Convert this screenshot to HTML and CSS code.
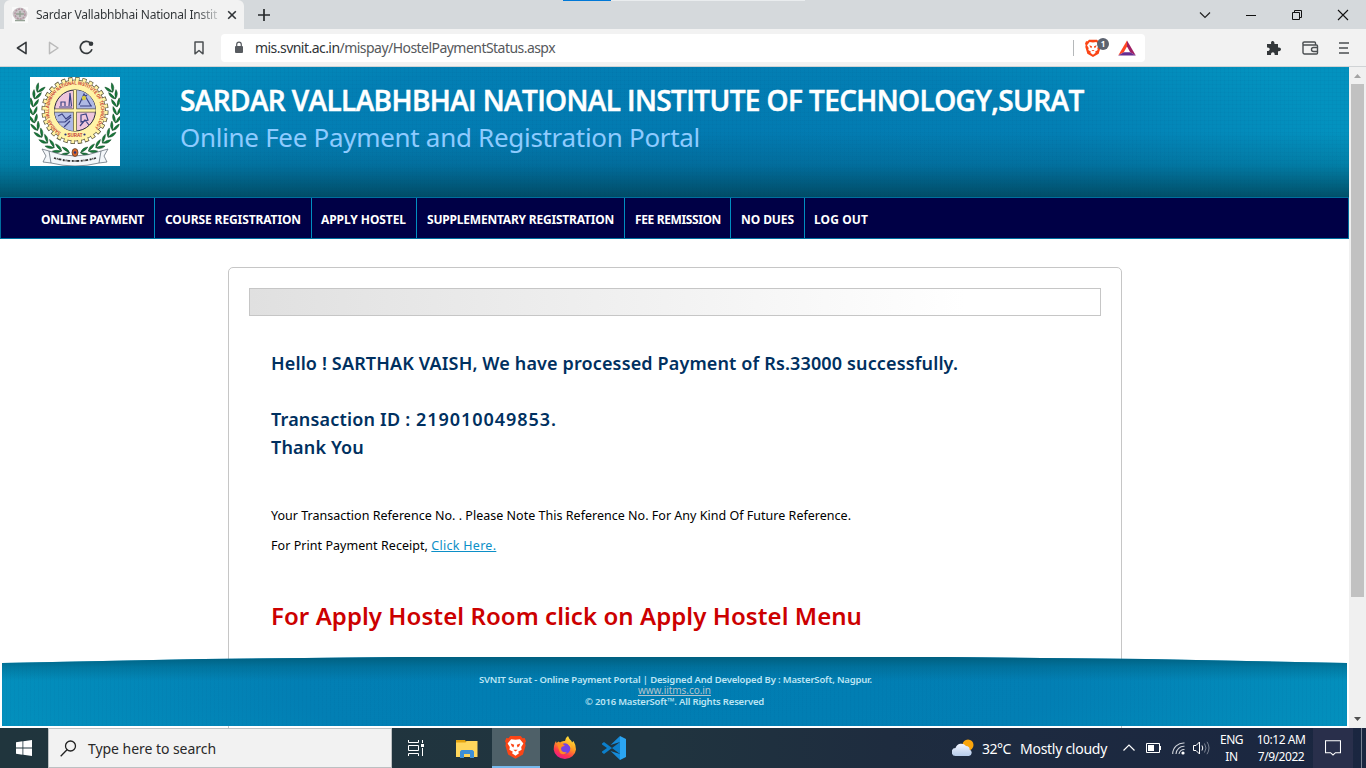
FILE: index.html
```html
<!DOCTYPE html>
<html lang="en">
<head>
<meta charset="utf-8">
<title>Sardar Vallabhbhai National Institute of Technology</title>
<link rel="stylesheet" href="styles.css">
</head>
<body>
<div class="titlebar">
  <div class="tab">
    <svg class="favicon" width="16" height="16" viewBox="0 0 16 16"><rect width="16" height="16" fill="#fafafa"/><ellipse cx="8" cy="7" rx="7.400" ry="6.500" fill="#c9c3c6"/><circle cx="8" cy="7" r="5" fill="none" stroke="#b294a0" stroke-width="1.500" stroke-dasharray="2 1"/><path d="M4 7h8M8 4v6M3 13.500h10" stroke="#95a295" stroke-width="1.500"/></svg>
    <span class="tab-title">Sardar Vallabhbhai National Instit</span>
    <svg class="tab-close" width="10" height="10" viewBox="0 0 10 10"><path d="M1.200 1.200l7.600 7.600M8.800 1.200L1.200 8.800" stroke="#303437" stroke-width="1.600"/></svg>
  </div>
  <svg class="newtab" width="12" height="12" viewBox="0 0 12 12"><path d="M6 0v12M0 6h12" stroke="#26292b" stroke-width="1.700"/></svg>
  <i class="loadmark"></i>
  <div class="window-buttons">
    <svg width="12" height="12" viewBox="0 0 12 12"><path d="M1 3.500l5 5 5-5" fill="none" stroke="#222" stroke-width="1.200"/></svg>
    <svg width="12" height="12" viewBox="0 0 12 12"><path d="M1 6.500h10" stroke="#111"/></svg>
    <svg width="12" height="12" viewBox="0 0 12 12"><path d="M1.500 3.500h7v7h-7zM3.500 3.500v-2h7v7h-2" fill="none" stroke="#111"/></svg>
    <svg width="12" height="12" viewBox="0 0 12 12"><path d="M1 1l10 10M11 1L1 11" stroke="#111" stroke-width="1.100"/></svg>
  </div>
</div>
<div class="toolbar">
  <svg class="back" width="12" height="14" viewBox="0 0 12 14"><path d="M10 1.300v11.400L1.400 7z" fill="none" stroke="#35393c" stroke-width="1.600" stroke-linejoin="round"/></svg>
  <svg class="forward" width="12" height="14" viewBox="0 0 12 14"><path d="M1.500 1.300v11.400L10 7z" fill="none" stroke="#bbb" stroke-width="1.500" stroke-linejoin="round"/></svg>
  <svg class="reload" width="15" height="15" viewBox="0 0 15 15"><path d="M11.500 3.100A6 6 0 1 0 13 9.300" fill="none" stroke="#35393c" stroke-width="1.700"/><circle cx="12" cy="3.800" r="2.300" fill="#35393c"/></svg>
  <svg class="bookmark" width="10" height="14" viewBox="0 0 10 14"><path d="M1 1h8v11.800L5 9.500l-4 3.300z" fill="none" stroke="#4c5053" stroke-width="1.500" stroke-linejoin="round"/></svg>
  <div class="address">
    <svg width="10" height="13" viewBox="0 0 10 13"><rect x="1" y="5" width="8" height="7" rx="1" fill="#575b60"/><path d="M2.700 6V3.400a2.300 2.300 0 0 1 4.600 0V6" fill="none" stroke="#575b60" stroke-width="1.200"/></svg>
    <span class="url"><b>mis.svnit.ac.in</b>/mispay/HostelPaymentStatus.aspx</span>
    <i class="rule"></i>
    <span class="shield">
      <svg width="16" height="18" viewBox="0 0 24 27"><use href="#lion"/></svg>
      <em>1</em>
    </span>
    <svg class="bat" width="18" height="16" viewBox="0 0 18 16"><path d="M9 .5L.2 15.500 5.800 12.200 9 6.500z" fill="#ff4724"/><path d="M9 .5l8.800 15L12.200 12.200 9 6.500z" fill="#9e1f63"/><path d="M.2 15.500h17.600l-5.600-3.300H5.800z" fill="#662d91"/></svg>
  </div>
  <div class="tools">
    <svg width="16" height="16" viewBox="0 0 16 16"><path d="M1 4h4.200C4 0 9.200 0 8.400 4H12v3.600c4-.9 4 4.400 0 3.600V15H8.600c.7-3.800-4-3.800-3.600 0H1v-4c3.600.3 3.600-4 0-3.500z" fill="#33373a"/></svg>
    <svg width="17" height="14" viewBox="0 0 17 14"><path d="M13.500 4V2a1 1 0 0 0-1-1H2.300a1.300 1.300 0 0 0 0 3h12.200a1 1 0 0 1 1 1v7a1 1 0 0 1-1 1H2.500A1.500 1.500 0 0 1 1 11.500V2.500M15.500 6.500h-4a2 2 0 0 0 0 4h4" fill="none" stroke="#4b4f52" stroke-width="1.400"/></svg>
    <svg width="10" height="12" viewBox="0 0 10 12"><path d="M0 1h10M0 6h9M0 11h10" stroke="#4b4f52" stroke-width="1.600"/></svg>
  </div>
</div>

<div class="viewport">
  <main class="page">
    <header class="banner">
      <svg class="logo" width="90" height="89" viewBox="0 0 90 89">
        <defs>
          <path id="ring" d="M31 55.500A26 26 0 1 1 59 55.500"/>
          <path id="leaf" d="M49 76Q46 71 40.500 72Q43 75 49 76M49 76Q46 81 40.500 80Q43 77 49 76" fill="#17793a" stroke="#0b3f1d" stroke-width=".4"/>
          <g id="branch">
            <use href="#leaf" transform="rotate(13 45 34)"/><use href="#leaf" transform="rotate(24 45 34)"/><use href="#leaf" transform="rotate(35 45 34)"/><use href="#leaf" transform="rotate(46 45 34)"/><use href="#leaf" transform="rotate(57 45 34)"/><use href="#leaf" transform="rotate(68 45 34)"/><use href="#leaf" transform="rotate(79 45 34)"/><use href="#leaf" transform="rotate(90 45 34)"/><use href="#leaf" transform="rotate(101 45 34)"/><use href="#leaf" transform="rotate(112 45 34)"/><use href="#leaf" transform="rotate(122 45 34)"/>
          </g>
          <g id="lion">
            <path d="M6 1h12l2 2.500 2.500-.3L24 7l-1 2 .5 3-3 10L12 27 3.500 22l-3-10L1 9 0 7l1.500-3.800L4 3.500z" fill="#fb4516"/>
            <path d="M7 4.500l5 .8 5-.8 4 5-2.500 4 .5 3-4 2.500 1 1.500-4 3-4-3 1-1.500-4-2.500.5-3L3 9.500z" fill="#fff"/>
            <path d="M6.500 9.500l4 1.300-.8 3.200-2-1.500zM17.500 9.500l-4 1.300.8 3.200 2-1.500zM9.500 16.500h5L12 18.500z" fill="#fb4516"/>
          </g>
        </defs>
        <rect width="90" height="89" fill="#fff"/>
        <use href="#branch"/><use href="#branch" transform="matrix(-1 0 0 1 90 0)"/>
        <circle cx="45" cy="33.500" r="30.500" fill="#fff3a6" stroke="#55503a" stroke-width=".8"/>
        <circle cx="45" cy="33.500" r="31" fill="none" stroke="#55503a" stroke-width="5" stroke-dasharray="4.200 2.757"/>
        <circle cx="45" cy="33.500" r="30.800" fill="none" stroke="#fff3a6" stroke-width="3.900" stroke-dasharray="3.100 3.812" stroke-dashoffset="-.55"/>
        <circle cx="45" cy="33.500" r="29.800" fill="#fff3a6"/>
        <circle cx="45" cy="33.500" r="20.500" fill="#eec6dc" stroke="#27263d" stroke-width="1"/>
        <path d="M45 33.500V13A20.500 20.500 0 0 1 65.500 33.500zM45 33.500V54A20.500 20.500 0 0 1 24.500 33.500z" fill="#aeb9e4"/>
        <path d="M45 13v41M24.500 33.500h41" stroke="#5d5946" stroke-width="4"/><path d="M45 13v41M24.500 33.500h41" stroke="#fff3a6" stroke-width="2.500"/>
        <path d="M31 29v-4h4v4M39 29l1-13 1.500 13M29 30h13M49 28l5-11 7 12M50 29h12M52 23l5-5M28 39l4-2 4 5 5-4M28 45h7l6-5M34 50l6-6M51 38l5-1 2 6-7 2zM50 49l5-6 4 5" fill="none" stroke="#3b4384" stroke-width="1.200"/>
        <circle cx="54" cy="21" r="2.200" fill="#d4c945"/>
        <text class="ring-text"><textPath href="#ring" textLength="126" lengthAdjust="spacingAndGlyphs">SARDAR VALLABHBHAI NATIONAL INSTITUTE OF TECHNOLOGY</textPath></text>
        <text class="seal-text" x="45" y="60" text-anchor="middle">SURAT</text>
        <circle cx="35.500" cy="57.500" r="1.100" fill="#26337c"/><circle cx="54.500" cy="57.500" r="1.100" fill="#26337c"/>
        <path d="M12 72l7 2Q45 84 71 74l7-2-4 7 3 6-8 1Q45 92 21 86l-8-1 3-6z" fill="#f4f7fa" stroke="#56616d" stroke-width=".7"/>
        <path d="M19 74l2 12M71 74l-2 12" stroke="#56616d" stroke-width=".7"/>
        <ellipse cx="45" cy="75.500" rx="3" ry="4" fill="#d8682c" stroke="#372c20" stroke-width=".6"/><circle cx="45" cy="75.500" r="1.200" fill="#26337c"/>
        <path d="M24 81Q45 87 66 81" fill="none" stroke="#333" stroke-width="1.800" stroke-dasharray="2 .8 1 .7 3 1.500"/>
      </svg>
      <div class="heading">
        <h1>SARDAR VALLABHBHAI NATIONAL INSTITUTE OF TECHNOLOGY,SURAT</h1>
        <h2>Online Fee Payment and Registration Portal</h2>
      </div>
    </header>
    <nav class="menu">
      <a class="m1">ONLINE PAYMENT</a><a class="m2">COURSE REGISTRATION</a><a class="m3">APPLY HOSTEL</a><a class="m4">SUPPLEMENTARY REGISTRATION</a><a class="m5">FEE REMISSION</a><a class="m6">NO DUES</a><a class="m7">LOG OUT</a>
    </nav>
    <section class="card">
      <div class="strip"></div>
      <div class="message">
        <p class="hello">Hello ! SARTHAK VAISH, We have processed Payment of Rs.33000 successfully.</p>
        <p class="trans"><span>Transaction ID :</span> 219010049853.</p>
        <p class="thanks">Thank You</p>
        <p class="note">Your Transaction Reference No. . Please Note This Reference No. For Any Kind Of Future Reference.</p>
        <p class="print">For Print Payment Receipt, <a>Click Here.</a></p>
        <p class="apply">For Apply Hostel Room click on Apply Hostel Menu</p>
      </div>
    </section>
    <footer class="footer">
      <p class="f1">SVNIT Surat - Online Payment Portal | Designed And Developed By : MasterSoft, Nagpur.</p>
      <p class="f2">www.iitms.co.in</p>
      <p class="f3">© 2016 MasterSoft™. All Rights Reserved</p>
    </footer>
  </main>
  <div class="scrollbar">
    <svg width="17" height="17" viewBox="0 0 17 17"><path d="M5 11l3.500-4 3.500 4z" fill="#a3a3a3"/></svg>
    <div class="thumb"></div>
    <svg width="17" height="17" viewBox="0 0 17 17"><path d="M5 6h7l-3.500 4z" fill="#505050"/></svg>
  </div>
</div>

<div class="taskbar">
  <div class="start"><svg width="16" height="16" viewBox="0 0 16 16"><path d="M0 2.300l6.500-1v6.300H0zM7.300 1.200L16 0v7.600H7.300zM0 8.400h6.500v6.300l-6.500-1zM7.300 8.400H16V16l-8.700-1.200z" fill="#fff"/></svg></div>
  <div class="search">
    <svg width="17" height="17" viewBox="0 0 17 17"><circle cx="10.500" cy="6" r="5" fill="none" stroke="#222" stroke-width="1.300"/><path d="M7 9.800L.7 16.300" stroke="#222" stroke-width="1.300"/></svg>
    <span>Type here to search</span>
  </div>
  <div class="apps">
    <div><svg width="17" height="16" viewBox="0 0 17 16"><path d="M.5 0v2.500h10V0M.5 16v-2.500h10V16M.5 5.500h10v5H.5zM14.500 0v3M14.500 8v8" fill="none" stroke="#fff"/><path d="M13 4h3v3h-3z" fill="#fff"/></svg></div>
    <div class="explorer"><svg width="22" height="19" viewBox="0 0 22 19"><path d="M0 1h9l1 1.500h11V18H0z" fill="#e4a410"/><path d="M0 3.500h9.500l1-1.500H21.500v16H0z" fill="#ffd65c"/><path d="M4 19v-6.500L5.500 11h11l1.500 1.500V19h-4v-4H8v4z" fill="#3c8fd8"/></svg></div>
    <div class="active"><svg width="21" height="24" viewBox="0 0 24 27"><use href="#lion"/></svg></div>
    <div class="fox"><svg width="24" height="24" viewBox="0 0 24 24"><defs><linearGradient id="flame" x1=".8" y1="0" x2=".3" y2="1"><stop offset="0" stop-color="#fff13f"/><stop offset=".45" stop-color="#ff9a22"/><stop offset=".75" stop-color="#ff394b"/><stop offset="1" stop-color="#ed168d"/></linearGradient></defs><path d="M1 10Q1.500 7 3 5l.5 2L5.500 5.500 7 6.500q2-2 5-1.500Q12 2 15 0q1 3 3.500 5l.5 1.500L20.500 5Q23 9 23 13.500A11.200 10.500 0 0 1 .7 13.500z" fill="url(#flame)"/><circle cx="12" cy="12.500" r="5.300" fill="#7542e5"/><path d="M4 8q5-2 8 2-4 0-4 3 1 4 6 3-3 4-7 1z" fill="#ff8b22"/><path d="M12 6q6 1 6.500 6L16 9.500q-1-2-4-3.500" fill="#ffba2c"/></svg></div>
    <div class="code"><svg width="24" height="24" viewBox="0 0 24 24"><path d="M0 7.500L2 6l16 12V6L2 18l-2-1.500v-1L5 12 0 8.500z" fill="#0c7fcb"/><path d="M18 0v24l-9.500-9L18 18V6L8.500 9z" fill="#168bd9"/><path d="M18 0l6 3v18l-6 3z" fill="#2ba5f2"/></svg></div>
  </div>
  <div class="tray">
    <svg class="weather" width="22" height="18" viewBox="0 0 22 18"><defs><linearGradient id="cloud" x2="0" y2="1"><stop stop-color="#f2f5ff"/><stop offset="1" stop-color="#b5cbea"/></linearGradient></defs><circle cx="16" cy="6" r="5.500" fill="#faa50b"/><path d="M4 17a4 4 0 0 1-.5-8A6 6 0 0 1 14 7q4 .5 3.500 3.500A3.400 3.400 0 0 1 17 17z" fill="url(#cloud)"/></svg>
    <span class="temp">32°C</span><span class="sky">Mostly cloudy</span>
    <svg class="chev" width="12" height="8" viewBox="0 0 12 8"><path d="M.5 6.500L6 1l5.500 5.500" fill="none" stroke="#fff" stroke-width="1.200"/></svg>
    <svg class="battery" width="15" height="10" viewBox="0 0 15 10"><path d="M.5.500h13v9H.5z" fill="none" stroke="#fff"/><path d="M2 2h6v6H2zM14 3h1v4h-1z" fill="#fff"/></svg>
    <svg class="wifi" width="13" height="13" viewBox="0 0 13 13"><g fill="none" stroke="#cfd3da" stroke-width="1.100"><path d="M.7 12A11 11 0 0 1 12.500 1M4 12A8 8 0 0 1 12.500 4.300M7 12a5 5 0 0 1 5.500-4.500"/></g><circle cx="11" cy="11" r="1.600" fill="#fff"/></svg>
    <svg class="volume" width="17" height="14" viewBox="0 0 17 14"><path d="M.5 4.500H3L6.500 1v12L3 9.500H.5z" fill="none" stroke="#fff"/><path d="M9 4.500q1.500 2.500 0 5" fill="none" stroke="#fff"/><path d="M11.500 2.500q3 4.500 0 9M14 .8q4 6.200 0 12.400" fill="none" stroke="#7b8392"/></svg>
    <div class="lang"><span>ENG</span><span>IN</span></div>
    <div class="clock"><span class="time">10:12 AM</span><span class="date">7/9/2022</span></div>
    <div class="notice"><svg width="16" height="16" viewBox="0 0 16 16"><path d="M.5.700h15v12H10.500L8 15 5.500 12.700h-5z" fill="none" stroke="#fff" stroke-width="1.100"/></svg></div>
  </div>
</div>
</body>
</html>
```
FILE: styles.css
```css
* { box-sizing: border-box; }
body { margin: 0; width: 1366px; height: 768px; overflow: hidden; display: flex; flex-direction: column; background: #fff; font-family: "Noto Sans", "Open Sans", sans-serif; }
h1, h2, p { margin: 0; white-space: nowrap; }
svg { display: block; flex: none; }

.titlebar { position: relative; height: 29px; flex: none; display: flex; align-items: center; background: #d5d9dc; }
.tab { width: 240px; height: 29px; margin-left: 4px; padding-left: 8px; display: flex; align-items: center; background: #f2f2f2; border-radius: 6px 6px 0 0; }
.tab-title { width: 182px; margin-left: 8px; font-size: 12px; line-height: 18px; letter-spacing: -.243px; white-space: nowrap; overflow: hidden; background: linear-gradient(90deg, #303437 160px, #c9cbcc 182px); -webkit-background-clip: text; background-clip: text; color: transparent; }
.tab-close { margin-left: 9px; }
.newtab { margin-left: 14px; }
.loadmark { position: absolute; left: 563px; top: 0; width: 242px; height: 1px; background: linear-gradient(90deg, #0078d7 48px, #e9ecee 48px); }
.window-buttons { margin-left: auto; margin-right: 17px; display: flex; gap: 34px; }

.toolbar { height: 38px; flex: none; display: flex; align-items: center; background: #f2f2f2; border-bottom: 1px solid #d0d3d5; }
.back { margin-left: 16px; }
.forward { margin-left: 20px; }
.reload { margin-left: 19px; }
.bookmark { margin-left: 100px; }
.address { width: 924px; height: 28px; margin-left: 17px; padding: 0 9px 0 13px; display: flex; align-items: center; background: #fff; border-radius: 4px; }
.url { margin-left: 11px; font-size: 14px; letter-spacing: -.54px; color: #56595c; white-space: nowrap; }
.url b { font-weight: 400; color: #303437; }
.rule { width: 1px; height: 16px; margin-left: auto; background: #b5b8ba; }
.shield { position: relative; margin-left: 11px; }
.shield em { position: absolute; left: 12px; top: -1px; width: 12px; height: 12px; border-radius: 6px; background: #5c6370; color: #fff; font: 700 8px/12px "Open Sans", sans-serif; text-align: center; }
.bat { margin-left: 17px; }
.tools { flex: 1; margin-right: 17px; display: flex; align-items: center; justify-content: flex-end; gap: 20px; }

.viewport { height: 661px; flex: none; display: flex; }
.page { position: relative; width: 1349px; overflow: hidden; }
.banner { height: 130px; padding: 10px 0 0 30px; display: flex; background:
  linear-gradient(180deg, rgba(0,60,80,0) 50%, rgba(0,67,91,.24) 75%, rgba(0,64,84,.8) 100%),
  repeating-linear-gradient(90deg, rgba(0,80,130,.05) 0 1px, transparent 1px 4px),
  repeating-linear-gradient(0deg, rgba(0,80,130,.05) 0 1px, transparent 1px 4px),
  radial-gradient(ellipse 610px 150px at 50% 65%, #0279b0, #037fb4 65%, #0392bf 110%); }
.heading { margin-left: 60px; }
h1 { margin-top: 4px; font-size: 28px; line-height: 38px; font-weight: 600; font-family: "Open Sans", sans-serif; letter-spacing: -.605px; color: #fff; -webkit-text-stroke: .5px #fff; }
h2 { font-size: 26px; line-height: 36px; font-weight: 400; letter-spacing: -.303px; color: #8ecbff; }
.ring-text { font: 700 5px "Liberation Sans", sans-serif; fill: #c5332c; }
.seal-text { font: 700 4.500px "Liberation Sans", sans-serif; fill: #c5332c; }
.menu { height: 42px; display: flex; background: #000046; border: 1px solid #006f9f; }
.menu a { height: 40px; padding-left: 10px; border-right: 1px solid #008fc0; font-size: 12px; line-height: 44px; font-weight: 700; color: #fff; white-space: nowrap; }
.menu .m1 { width: 154px; padding-left: 40px; letter-spacing: -.277px; }
.menu .m2 { width: 157px; letter-spacing: -.106px; }
.menu .m3 { width: 105px; padding-left: 9px; letter-spacing: -.069px; }
.menu .m4 { width: 208px; letter-spacing: -.206px; }
.menu .m5 { width: 106px; letter-spacing: -.374px; }
.menu .m6 { width: 74px; letter-spacing: -.079px; }
.menu .m7 { padding-left: 9px; border: 0; letter-spacing: .106px; }
.card { width: 894px; height: 480px; margin: 28px 0 0 228px; padding: 20px 20px 0; border: 1px solid #c6c6c6; border-radius: 5px; }
.strip { height: 28px; border: 1px solid #c6c6c6; background: linear-gradient(90deg, #e0e0e0, #fff 84%); }
.message { padding: 33px 0 0 22px; color: #003060; }
.hello, .trans, .thanks { font-size: 18px; line-height: 28px; font-weight: 600; }
.hello { letter-spacing: .137px; }
.trans { margin-top: 28px; letter-spacing: .96px; }
.trans span { letter-spacing: .18px; }
.thanks { letter-spacing: .161px; }
.note, .print { font-size: 12.500px; line-height: 30px; color: #000; }
.note { margin-top: 40px; letter-spacing: .016px; }
.print { letter-spacing: .049px; }
.print a { letter-spacing: .282px; color: #0c8fc7; text-decoration: underline; }
.apply { margin-top: 38px; font-size: 24px; line-height: 34px; font-weight: 600; letter-spacing: .063px; color: #c00; }
.footer { position: absolute; left: 2px; bottom: 2px; width: 1345px; height: 69px; padding-top: 17px; text-align: center; color: #bde5f4; clip-path: polygon(0 6px, 15% 2px, 30% 0, 70% 0, 85% 2px, 100% 6px, 100% 100%, 0 100%); background:
  linear-gradient(180deg, #006080 0, rgba(0,96,128,.45) 10px, rgba(0,96,128,0) 24px),
  repeating-linear-gradient(90deg, rgba(0,80,130,.05) 0 1px, transparent 1px 4px),
  radial-gradient(ellipse 630px 110px at 50% 50%, #007db2 0, #027fb4 60%, #0390bd 110%); }
.footer p { font-size: 9.500px; line-height: 11px; font-weight: 600; }
.footer .f1 { padding-left: 2px; letter-spacing: -.168px; }
.footer .f2 { font-size: 10px; font-weight: 400; letter-spacing: -.049px; color: #b5c3cb; text-decoration: underline; }
.footer .f3 { letter-spacing: -.202px; }
.scrollbar { width: 17px; display: flex; flex-direction: column; background: #f0f0f0; }
.thumb { width: 13px; height: 513px; margin: 0 2px auto; background: #c1c1c1; }

.taskbar { height: 40px; flex: none; display: flex; background: linear-gradient(90deg, #20353d 0, #20343f 48%, #1e2c3f 65%, #1d2a40 75%, #1a2640 100%); color: #fff; }
.start { width: 48px; display: flex; align-items: center; justify-content: center; }
.search { width: 344px; padding-left: 11px; display: flex; align-items: center; background: #f2f2f2; border: 1px solid #bcc0c2; }
.search span { margin-left: 11px; font-size: 14px; letter-spacing: -.046px; color: #292929; }
.apps { display: flex; }
.apps div { width: 48px; display: flex; align-items: center; justify-content: center; }
.apps .explorer { width: 52px; padding-left: 1px; }
.apps .active { padding-right: 1px; background: #4e6068; border-bottom: 2px solid #76b9ed; }
.apps .fox { width: 50px; }
.tray { flex: 1; margin-right: 4px; display: flex; align-items: center; justify-content: flex-end; white-space: nowrap; border-right: 1px solid #788091; }
.temp { margin-left: 8px; width: 30px; font-size: 14px; letter-spacing: -.464px; }
.sky { margin-left: 8px; width: 87px; font-size: 14px; letter-spacing: -.271px; }
.chev { margin-left: 16px; }
.battery { margin-left: 11px; }
.wifi { margin-left: 11px; }
.volume { margin-left: 8px; }
.lang, .clock { display: flex; flex-direction: column; align-items: center; font-size: 12px; line-height: 17px; letter-spacing: -.45px; }
.lang { width: 23px; margin-left: 10px; }
.clock { width: 50px; margin-left: 13px; }
.notice { width: 40px; height: 40px; margin-left: 7px; margin-right: 8px; display: flex; align-items: center; justify-content: center; background: #292f4b; }
```
